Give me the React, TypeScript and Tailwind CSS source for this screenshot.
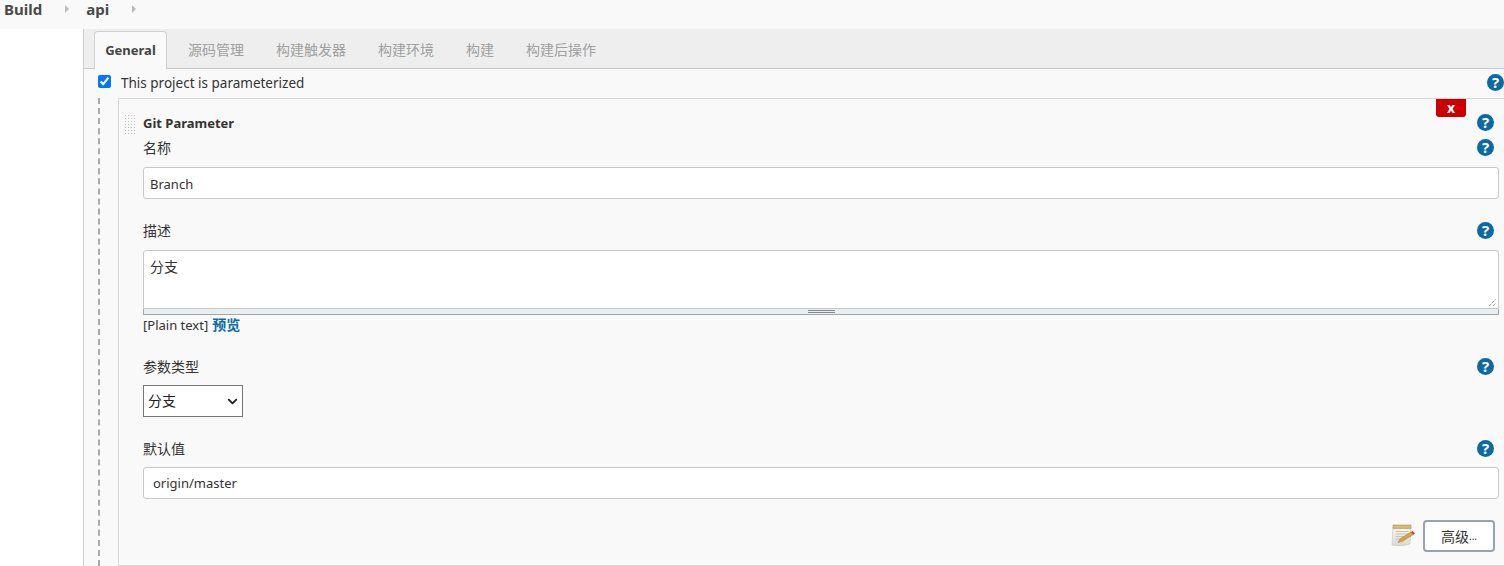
import { ChevronDown } from "lucide-react";

function Help() {
  return (
    <span className="mb-[4px] flex h-[17px] w-[17px] shrink-0 items-center justify-center rounded-full bg-[#0b6aa2] text-[15px] leading-none font-bold text-white">
      ?
    </span>
  );
}

function Field({ label, children, className }: { label: string; children?: React.ReactNode; className: string }) {
  return (
    <div className={className}>
      <div className="flex h-[20px] items-center justify-between pr-[10px]">
        <span className="mb-[3px] text-[14px] text-[#333]">{label}</span>
        <Help />
      </div>
      {children}
    </div>
  );
}

function TextBox({ value, className }: { value: string; className: string }) {
  return (
    <div className={`flex h-[32px] items-center rounded-[3px] border border-[#c8c8c8] bg-white text-[13px] text-[#333] ${className}`}>
      {value}
    </div>
  );
}

function NotepadIcon() {
  return (
    <svg width="24" height="24" viewBox="0 0 24 24">
      <defs>
        <linearGradient id="page" x1="0" y1="0" x2="0" y2="1">
          <stop offset="0" stopColor="#fbfaf4" />
          <stop offset="1" stopColor="#d9d9d4" />
        </linearGradient>
      </defs>
      <path d="M2 3h18l-1 17c-6 2-12 2-18 1z" fill="url(#page)" stroke="#c4c4bc" strokeWidth="0.6" />
      <rect x="2" y="1" width="18" height="3.5" fill="#d9b86a" stroke="#a98c45" strokeWidth="0.5" />
      <path d="M4.5 7.5h13M4.5 10h13M4.5 12.5h9M4.5 15h5" stroke="#bdbdbd" strokeWidth="0.9" />
      <path d="M7 18.5l2-3.5L20 8l2.5 2.5L11 17.5z" fill="#d9a441" stroke="#9a7428" strokeWidth="0.5" />
      <path d="M20 8l2.5 2.5 1.5-1L21.5 7z" fill="#d0342c" />
    </svg>
  );
}

export default function App() {
  const tabs = ["源码管理", "构建触发器", "构建环境", "构建", "构建后操作"];
  return (
    <div className="h-[566px] w-[1504px] overflow-hidden bg-white font-['Noto_Sans','Noto_Sans_CJK_SC',sans-serif] text-[#333]">
      <div className="flex h-[29px] items-center bg-[#f9f9f9] pb-[11px] pl-[4px] text-[15px] font-bold text-[#4a4a4a]">
        <span>Build</span>
        <span className="ml-[23px] h-0 w-0 border-y-[4px] border-l-[4px] border-y-transparent border-l-[#bbb]" />
        <span className="ml-[17px]">api</span>
        <span className="ml-[23px] h-0 w-0 border-y-[4px] border-l-[4px] border-y-transparent border-l-[#bbb]" />
      </div>

      <div className="ml-[83px] border-l border-[#d0d0d0] bg-[#f9f9f9]">
        <div className="flex h-[40px] items-end border-b border-[#c8c8c8] bg-[#eeeeee] pl-[10px] text-[14px] text-[#a0a0a0]">
          <div className="-mb-px flex h-[38px] w-[73px] items-center justify-center rounded-t-[4px] border border-b-0 border-[#d0d0d0] bg-[#f9f9f9] text-[13px] font-bold text-[#444]">
            General
          </div>
          <div className="flex h-[37px] items-center gap-[32px] pl-[21px]">
            {tabs.map((t) => (
              <span key={t}>{t}</span>
            ))}
          </div>
        </div>

        <div className="flex h-[29px] items-center justify-between pl-[14px]">
          <div className="flex items-center gap-[10px]">
            <input type="checkbox" defaultChecked className="mb-[4px] h-[13px] w-[13px] accent-[#0075ff]" />
            <span className="text-[13.5px]">This project is parameterized</span>
          </div>
          <span className="mt-[2px]">
            <Help />
          </span>
        </div>

        <div className="ml-[14px] border-l-2 border-dashed border-[#aaa] pl-[18px]">
          <div className="relative h-[468px] border-t border-b border-l border-[#d8d8d8] pt-[15px] pl-[24px]">
            <span className="absolute top-[15px] left-[5px] h-[20px] w-[12px] bg-[radial-gradient(#bbb_1px,transparent_1px)] bg-[length:3px_3px]" />
            <button className="absolute top-0 right-[38px] flex h-[18px] w-[30px] items-center justify-center rounded-b-[3px] bg-[#cc0000] text-[14px] leading-none font-bold text-white">
              x
            </button>

            <div className="flex h-[20px] items-center justify-between pr-[10px]">
              <span className="text-[13px] font-bold">Git Parameter</span>
              <Help />
            </div>

            <Field label="名称" className="mt-[5px]">
              <TextBox value="Branch" className="mt-[8px] mr-[5px] pt-[4px] pl-[6px]" />
            </Field>

            <Field label="描述" className="mt-[23px]">
              <div className="mt-[8px] mr-[5px]">
                <div className="relative h-[59px] rounded-t-[3px] border border-[#c8c8c8] bg-white py-[5px] pl-[6px] text-[14px]">
                  分支
                  <svg className="absolute right-[1px] bottom-[1px]" width="9" height="9" viewBox="0 0 9 9">
                    <path d="M1 8L8 1M5 8l3-3" stroke="#666" strokeDasharray="1 1" />
                  </svg>
                </div>
                <div className="flex h-[6px] items-center justify-center border-x border-b border-[#a0a8ac] bg-[#e9eef0]">
                  <span className="h-[3px] w-[27px] border-y border-[#888]" />
                </div>
              </div>
              <div className="mt-[1px] flex h-[20px] items-center gap-[4px] text-[13px]">
                [Plain text] <span className="mb-[4px] text-[14px] font-bold text-[#0b6aa2]">预览</span>
              </div>
            </Field>

            <Field label="参数类型" className="mt-[22px]">
              <div className="mt-[7px] flex h-[32px] w-[100px] items-center justify-between border border-[#767676] bg-white pr-[2px] pl-[4px] text-[14px] text-[#222]">
                <span className="mb-[2px]">分支</span>
                <ChevronDown size={15} strokeWidth={3} />
              </div>
            </Field>

            <Field label="默认值" className="mt-[23px]">
              <TextBox value="origin/master" className="mt-[7px] mr-[5px] pt-[2px] pl-[9px]" />
            </Field>

            <div className="mt-[21px] flex items-center justify-end gap-[8px] pr-[9px]">
              <NotepadIcon />
              <button className="flex h-[32px] w-[72px] items-center justify-center rounded-[4px] border-2 border-[#98a4ad] bg-white text-[14px] text-[#333]">
                高级<span className="text-[10px]">...</span>
              </button>
            </div>
          </div>
        </div>
      </div>
    </div>
  );
}
